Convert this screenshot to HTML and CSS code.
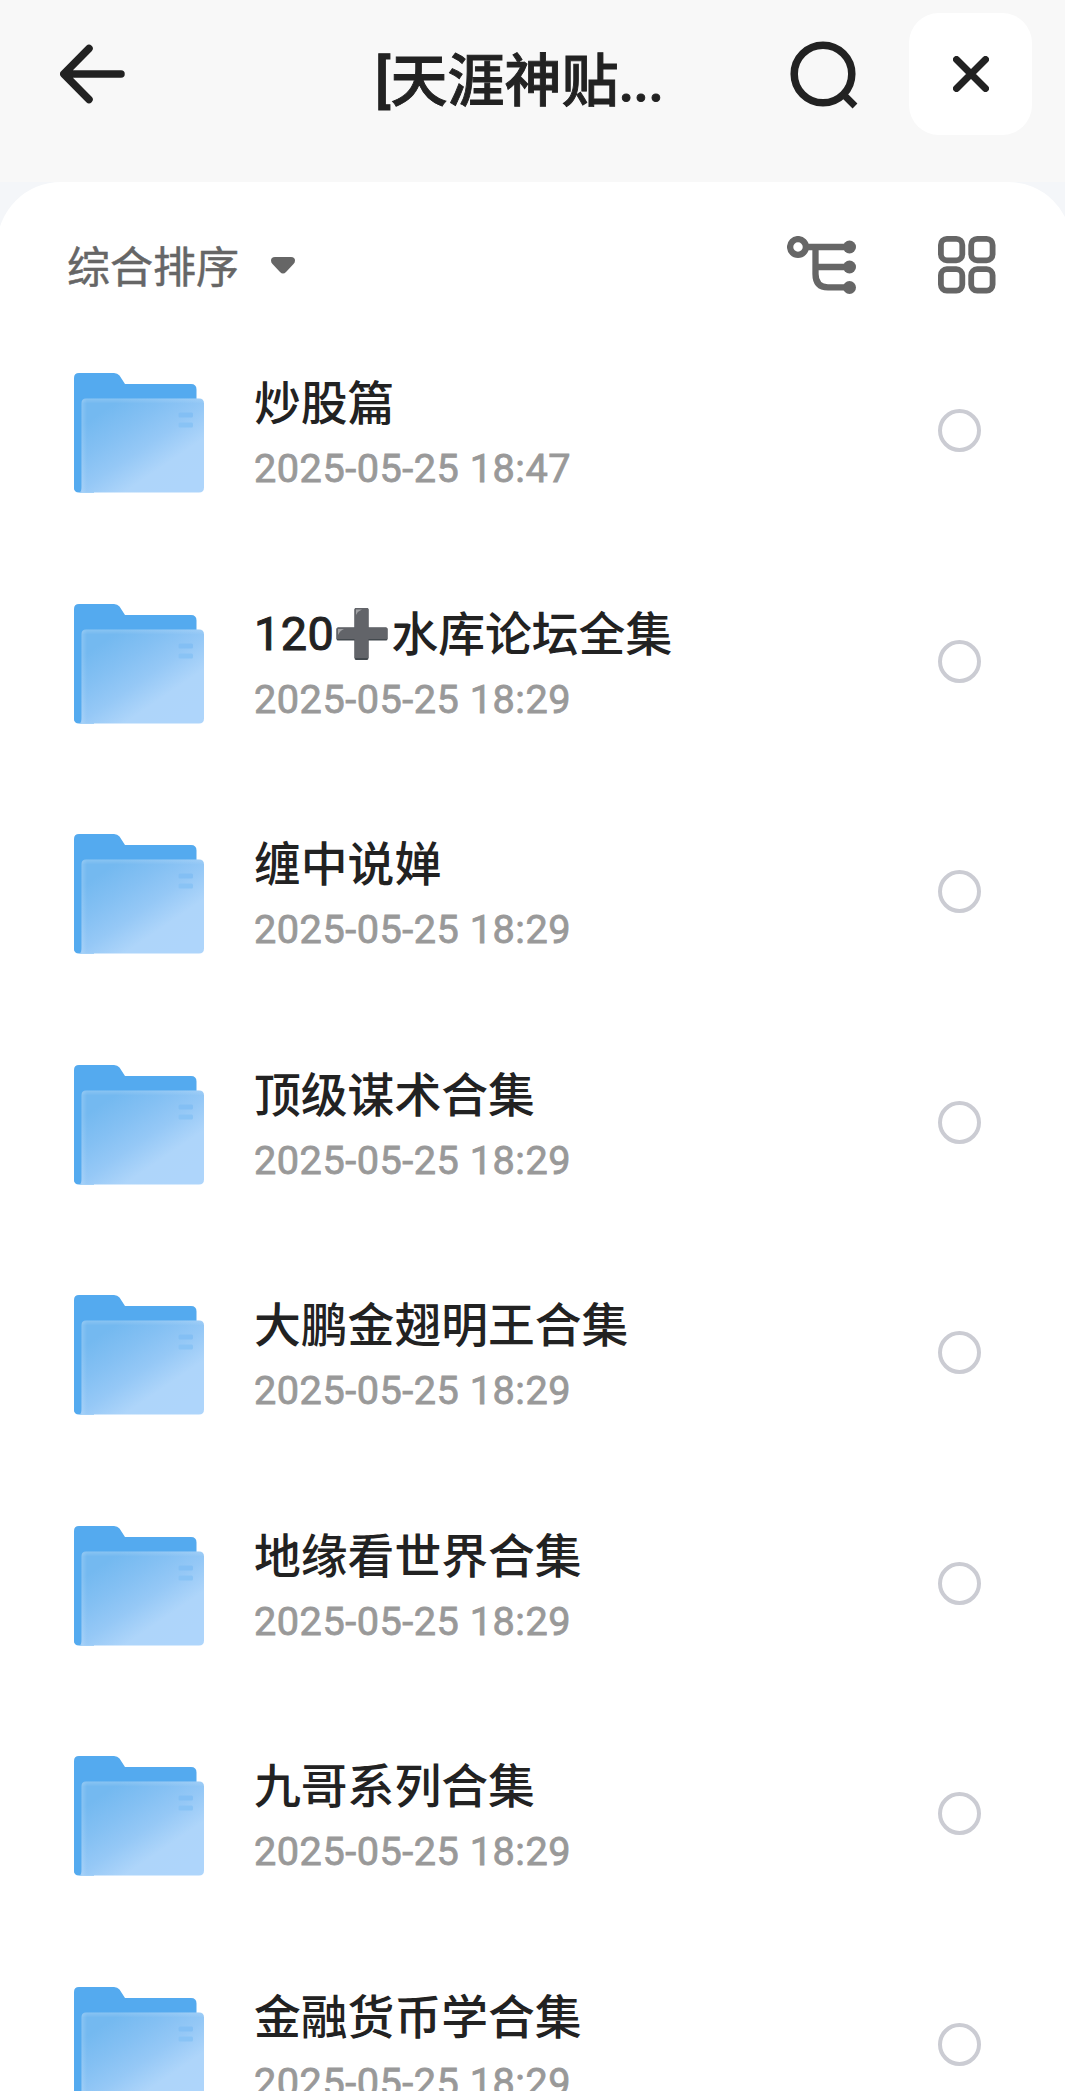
FILE: index.html
```html
<!DOCTYPE html>
<html lang="zh-CN">
<head>
<meta charset="utf-8">
<title>[天涯神贴...</title>
<link rel="stylesheet" href="styles.css">
</head>
<body>
<svg class="defs" width="0" height="0" aria-hidden="true">
  <defs>
    <linearGradient id="front" x1="0.08" y1="0.05" x2="0.85" y2="0.9">
      <stop offset="0.12" stop-color="#74b9f0"/>
      <stop offset="0.35" stop-color="#84c0f3"/>
      <stop offset="0.56" stop-color="#95c8f6"/>
      <stop offset="0.78" stop-color="#aed5fa"/>
      <stop offset="1" stop-color="#aed5fb"/>
    </linearGradient>
    <linearGradient id="edgeTop" x1="0" y1="0" x2="0" y2="1">
      <stop offset="0" stop-color="#fff" stop-opacity=".16"/>
      <stop offset="1" stop-color="#fff" stop-opacity="0"/>
    </linearGradient>
    <linearGradient id="edgeLeft" x1="0" y1="0" x2="1" y2="0">
      <stop offset="0" stop-color="#fff" stop-opacity=".16"/>
      <stop offset="1" stop-color="#fff" stop-opacity="0"/>
    </linearGradient>
    <symbol id="folder" viewBox="0 0 130 120">
      <path fill="#54aaef" d="M5 0H40Q43.500 0 45.500 2.500L51 11H117Q122.500 11 122.500 16.500V60H10V119H5Q0 119 0 114V5Q0 0 5 0Z"/>
      <path fill="#54aaef" d="M0 60H20V119.500H5Q0 119.500 0 114.500Z"/>
      <path fill="url(#front)" d="M12 25.500H125Q130 25.500 130 30.500V114.500Q130 119.500 125 119.500H5Q7.500 119 7.500 114V30.500Q7.500 25.500 12 25.500Z"/>
      <path fill="url(#edgeTop)" d="M12 25.500H125Q130 25.500 130 30.500H7.500Q7.500 25.500 12 25.500Z"/>
      <path fill="url(#edgeLeft)" d="M7.500 30Q7.500 27 9 26.500H13V119.500H7.500Z"/>
      <rect x="104.500" y="39.500" width="14.500" height="5" rx="1.500" fill="#83bff4"/>
      <rect x="104.500" y="49.500" width="14.500" height="5" rx="1.500" fill="#89c3f5"/>
    </symbol>
  </defs>
</svg>

<header class="topbar">
  <svg class="back" viewBox="0 0 66 60" fill="none" stroke="#222" stroke-width="7.500" stroke-linecap="round" stroke-linejoin="round"><path d="M61 30H5M29 4.500L3.800 30L29 55.500"/></svg>
  <h1 class="title">[天涯神贴<span class="dots">...</span></h1>
  <svg class="search" viewBox="0 0 70 70" fill="none" stroke="#222" stroke-width="7.500"><circle cx="33" cy="34" r="28.800"/><path stroke-width="6.800" d="M53.500 54.500L65 66"/></svg>
  <button class="close" aria-label="关闭"><svg viewBox="0 0 36 36" fill="none" stroke="#222" stroke-width="7" stroke-linecap="round"><path d="M3.500 3.500L32.500 32.500M32.500 3.500L3.500 32.500"/></svg></button>
</header>

<main class="sheet-wrap">
  <div class="sheet">
    <div class="toolbar">
      <span class="sort">综合排序</span>
      <svg class="caret" viewBox="0 0 24 17" fill="#666"><path d="M4 0H20Q24 0 24 3.500Q24 5.500 22.500 7L15 15Q12 18 9 15L1.500 7Q0 5.500 0 3.500Q0 0 4 0Z"/></svg>
      <svg class="tree" viewBox="0 0 70 58" fill="none" stroke="#666" stroke-width="6.300"><circle cx="11" cy="11" r="7.900"/><path d="M19 11H62M28.500 11V38Q28.500 51.300 41 51.300H62M29 31H62"/><g fill="#666" stroke="none"><circle cx="62.500" cy="11" r="6.500"/><circle cx="62.500" cy="31" r="6.500"/><circle cx="62.500" cy="51.500" r="6.500"/></g></svg>
      <svg class="grid" viewBox="0 0 58 58" fill="none" stroke="#666" stroke-width="5.800"><rect x="2.900" y="2.900" width="21.400" height="21.400" rx="6"/><rect x="33.200" y="2.900" width="21.400" height="21.400" rx="6"/><rect x="2.900" y="33.200" width="21.400" height="21.400" rx="6"/><rect x="33.200" y="33.200" width="21.400" height="21.400" rx="6"/></svg>
    </div>
    <ul class="list">
      <li class="row"><svg class="folder"><use href="#folder"/></svg><div class="info"><div class="name">炒股篇</div><div class="date">2025-05-25 18:47</div></div><span class="radio"></span></li>
      <li class="row"><svg class="folder"><use href="#folder"/></svg><div class="info"><div class="name"><span class="digits">120</span><svg class="plus" viewBox="0 0 52 53" role="img" aria-label="➕"><path fill="#43494e" d="M20 1H31Q32.500 1 32.500 2.500V20.500H50Q51.500 20.500 51.500 22V32Q51.500 33.500 50 33.500H32.500V51Q32.500 53 31 53H20Q18.500 53 18.500 51V33.500H2Q.5 33.500 .5 32V22Q.5 20.500 2 20.500H18.500V2.500Q18.500 1 20 1Z"/><path fill="#626469" d="M20 1H31Q32.500 1 32.500 2.500V20.500H50Q51.500 20.500 51.500 22V32H32.500V51H18.500V32H.5V22Q.5 20.500 2 20.500H18.500V2.500Q18.500 1 20 1Z"/><path fill="#a1a2a5" d="M20 2.500H26Q22 4 20 8ZM2 22H8Q4 23.500 2 28Z"/></svg>水库论坛全集</div><div class="date">2025-05-25 18:29</div></div><span class="radio"></span></li>
      <li class="row"><svg class="folder"><use href="#folder"/></svg><div class="info"><div class="name">缠中说婵</div><div class="date">2025-05-25 18:29</div></div><span class="radio"></span></li>
      <li class="row"><svg class="folder"><use href="#folder"/></svg><div class="info"><div class="name">顶级谋术合集</div><div class="date">2025-05-25 18:29</div></div><span class="radio"></span></li>
      <li class="row"><svg class="folder"><use href="#folder"/></svg><div class="info"><div class="name">大鹏金翅明王合集</div><div class="date">2025-05-25 18:29</div></div><span class="radio"></span></li>
      <li class="row"><svg class="folder"><use href="#folder"/></svg><div class="info"><div class="name">地缘看世界合集</div><div class="date">2025-05-25 18:29</div></div><span class="radio"></span></li>
      <li class="row"><svg class="folder"><use href="#folder"/></svg><div class="info"><div class="name">九哥系列合集</div><div class="date">2025-05-25 18:29</div></div><span class="radio"></span></li>
      <li class="row"><svg class="folder"><use href="#folder"/></svg><div class="info"><div class="name">金融货币学合集</div><div class="date">2025-05-25 18:29</div></div><span class="radio"></span></li>
    </ul>
  </div>
</main>
</body>
</html>
```
FILE: styles.css
```css
* { box-sizing: border-box; }

body {
  margin: 0;
  height: 2091px;
  overflow: hidden;
  display: flex;
  flex-direction: column;
  background: #fff;
  color: #222;
  font-family: Roboto, "Noto Sans CJK SC", sans-serif;
}

svg { display: block; flex: none; }
.defs { position: absolute; }

.topbar {
  flex: none;
  height: 182px;
  display: flex;
  align-items: flex-start;
  padding: 13px 33px 0 60px;
  background: #f8f8f8;
}
.back { width: 66px; height: 60px; margin-top: 31px; }
.title {
  margin: 27px 0 0 249px;
  width: 415px;
  font-size: 57px;
  line-height: 84px;
  font-weight: 500;
  white-space: nowrap;
  -webkit-text-stroke: 0.9px #222;
}
.dots { letter-spacing: -1px; }
.search { width: 70px; height: 70px; margin-top: 27px; }
.close {
  width: 123px;
  height: 122px;
  margin-left: auto;
  padding: 0;
  border: 0;
  border-radius: 30px;
  background: #fff;
  display: flex;
  align-items: center;
  justify-content: center;
}
.close svg { width: 36px; height: 36px; }

.sheet-wrap { flex: none; overflow: hidden; background: #f4f6f9; }
.sheet {
  margin: 0 -7px 0 -3px;
  padding: 0 7px 0 3px;
  background: #fff;
  border-radius: 64px 64px 0 0;
}

.toolbar {
  height: 166px;
  display: flex;
  align-items: center;
  padding: 0 69px 0 67px;
}
.sort {
  padding-top: 6px;
  font-size: 43px;
  line-height: 60px;
  color: #666;
  -webkit-text-stroke: 0.5px #666;
}
.caret { width: 24px; height: 17px; margin: 1px 0 0 32px; }
.tree { width: 70px; height: 58px; margin-left: auto; }
.grid { width: 58px; height: 58px; margin-left: 81px; }

.list { list-style: none; margin: 0; padding: 0; }
.row {
  height: 230.5px;
  display: flex;
  align-items: flex-start;
  padding: 25px 84px 0 74px;
}
.folder { width: 130px; height: 120px; }
.info { margin-left: 50px; flex: 1; }
.name {
  display: flex;
  align-items: center;
  height: 62px;
  font-size: 46.8px;
  line-height: 62px;
  font-weight: 500;
}
.digits {
  margin-top: -2px;
  font-weight: 400;
  letter-spacing: 0.5px;
  -webkit-text-stroke: 1px #222;
}
.plus { width: 52px; height: 53px; margin: -2px 3px 0 2px; }
.date {
  margin-top: 10px;
  font-size: 39.7px;
  line-height: 48px;
  font-weight: 400;
  letter-spacing: 0.5px;
  color: #999;
  -webkit-text-stroke: 0.8px #999;
}
.radio {
  width: 43px;
  height: 43px;
  margin-top: 36px;
  border: 4px solid #cbccd3;
  border-radius: 50%;
}
```
